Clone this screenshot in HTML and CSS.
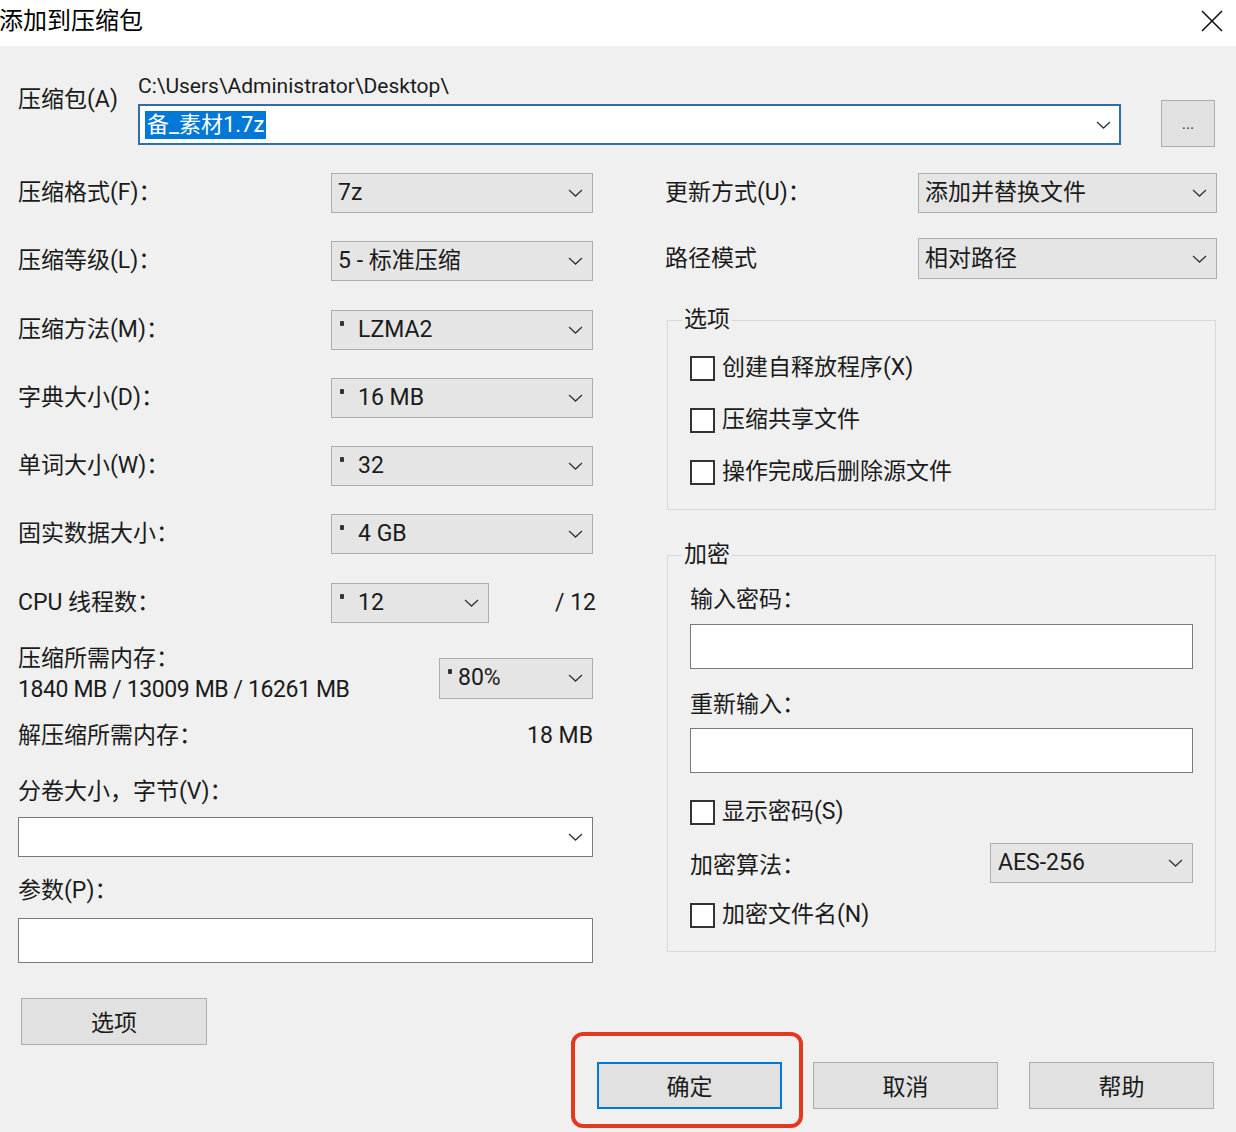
FILE: index.html
```html
<!DOCTYPE html>
<html>
<head>
	<meta charset="utf-8">
	<title>添加到压缩包</title>
	<link rel="stylesheet" href="styles.css">
</head>
<body>
<div class="dialog">
	<div class="titlebar">
		<span class="title">添加到压缩包</span>
		<svg class="close" viewBox="0 0 22 22"><path d="M1 1L21 21M21 1L1 21"/></svg>
	</div>

	<div class="content">
		<div class="archive">
			<div class="archive_label">压缩包(A)</div>
			<div class="archive_field">
				<div class="path">C:\Users\Administrator\Desktop\</div>
				<div class="combo combo_focus">
					<span class="sel_text">备_素材1.7z</span>
					<svg class="chev" viewBox="0 0 15 8"><path d="M1 1L7.5 7L14 1"/></svg>
				</div>
			</div>
			<button class="btn btn_browse">...</button>
		</div>

		<div class="columns">
			<!-- left column -->
			<div class="col_left">
				<div class="grid_rows">
					<div class="row">
						<span class="lbl">压缩格式(F)：</span>
						<div class="select"><span>7z</span><svg class="chev" viewBox="0 0 15 8"><path d="M1 1L7.5 7L14 1"/></svg></div>
					</div>
					<div class="row">
						<span class="lbl">压缩等级(L)：</span>
						<div class="select"><span>5 - 标准压缩</span><svg class="chev" viewBox="0 0 15 8"><path d="M1 1L7.5 7L14 1"/></svg></div>
					</div>
					<div class="row">
						<span class="lbl">压缩方法(M)：</span>
						<div class="select"><span><i class="dot"></i>LZMA2</span><svg class="chev" viewBox="0 0 15 8"><path d="M1 1L7.5 7L14 1"/></svg></div>
					</div>
					<div class="row">
						<span class="lbl">字典大小(D)：</span>
						<div class="select"><span><i class="dot"></i>16 MB</span><svg class="chev" viewBox="0 0 15 8"><path d="M1 1L7.5 7L14 1"/></svg></div>
					</div>
					<div class="row">
						<span class="lbl">单词大小(W)：</span>
						<div class="select"><span><i class="dot"></i>32</span><svg class="chev" viewBox="0 0 15 8"><path d="M1 1L7.5 7L14 1"/></svg></div>
					</div>
					<div class="row">
						<span class="lbl">固实数据大小：</span>
						<div class="select"><span><i class="dot"></i>4 GB</span><svg class="chev" viewBox="0 0 15 8"><path d="M1 1L7.5 7L14 1"/></svg></div>
					</div>
					<div class="row">
						<span class="lbl">CPU 线程数：</span>
						<div class="cpu_cell">
							<div class="select select_cpu"><span><i class="dot"></i>12</span><svg class="chev" viewBox="0 0 15 8"><path d="M1 1L7.5 7L14 1"/></svg></div>
							<span class="cpu_max">/ 12</span>
						</div>
					</div>
				</div>

				<div class="mem">
					<div class="mem_text">
						<div>压缩所需内存：</div>
						<div class="mem_nums">1840 MB / 13009 MB / 16261 MB</div>
					</div>
					<div class="select select_mem"><span><i class="dot dot_near"></i>80%</span><svg class="chev" viewBox="0 0 15 8"><path d="M1 1L7.5 7L14 1"/></svg></div>
				</div>

				<div class="unmem">
					<span>解压缩所需内存：</span>
					<span>18 MB</span>
				</div>

				<div class="lbl_block lbl_volume">分卷大小，字节(V)：</div>
				<div class="combo combo_white">
					<span></span>
					<svg class="chev" viewBox="0 0 15 8"><path d="M1 1L7.5 7L14 1"/></svg>
				</div>

				<div class="lbl_block lbl_param">参数(P)：</div>
				<div class="text_input input_param"></div>

				<button class="btn btn_options">选项</button>
			</div>

			<!-- right column -->
			<div class="col_right">
				<div class="row row_update">
					<span class="lbl">更新方式(U)：</span>
					<div class="select"><span>添加并替换文件</span><svg class="chev" viewBox="0 0 15 8"><path d="M1 1L7.5 7L14 1"/></svg></div>
				</div>
				<div class="row row_path">
					<span class="lbl">路径模式</span>
					<div class="select select_tall"><span>相对路径</span><svg class="chev" viewBox="0 0 15 8"><path d="M1 1L7.5 7L14 1"/></svg></div>
				</div>

				<fieldset class="group group_opts">
					<legend>选项</legend>
					<div class="check check_first"><span class="box"></span>创建自释放程序(X)</div>
					<div class="check"><span class="box"></span>压缩共享文件</div>
					<div class="check"><span class="box"></span>操作完成后删除源文件</div>
				</fieldset>

				<fieldset class="group group_enc">
					<legend>加密</legend>
					<div class="lbl_block lbl_pwd">输入密码：</div>
					<div class="text_input input_pwd"></div>
					<div class="lbl_block lbl_repwd">重新输入：</div>
					<div class="text_input input_repwd"></div>
					<div class="check check_show"><span class="box"></span>显示密码(S)</div>
					<div class="algo">
						<span>加密算法：</span>
						<div class="select select_algo"><span>AES-256</span><svg class="chev" viewBox="0 0 15 8"><path d="M1 1L7.5 7L14 1"/></svg></div>
					</div>
					<div class="check check_names"><span class="box"></span>加密文件名(N)</div>
				</fieldset>
			</div>
		</div>

		<div class="footer">
			<div class="ok_wrap">
				<button class="btn btn_ok">确定</button>
				<span class="mark"></span>
			</div>
			<button class="btn">取消</button>
			<button class="btn">帮助</button>
		</div>
	</div>
</div>
</body>
</html>
```

FILE: styles.css
```css
*{margin: 0;padding: 0;box-sizing: border-box;}
body{font-family: Roboto, "Noto Sans CJK SC", sans-serif;font-size: 23px;color: #1b1b1b;background: #f0f0f0;}
.dialog{width: 1236px;height: 1132px;background: #f0f0f0;overflow: hidden;}

.btn{width: 185px;height: 47px;background: #e1e1e1;border: 1px solid #adadad;font-family: Roboto, "Noto Sans CJK SC", sans-serif;font-size: 23px;color: #1b1b1b;}

.titlebar{height: 46px;background: #fff;display: flex;justify-content: space-between;align-items: center;padding: 0 13px 4px 0;}
.title{font-size: 24px;color: #000;margin-left: -1px;line-height: 30px;}
.close{width: 22px;height: 22px;stroke: #111;stroke-width: 1.6;fill: none;}

.content{padding: 0 19px 0 18px;}

.archive{display: grid;grid-template-columns: 120px 983px 1fr;padding: 25px 2px 0 0;}
.archive_label{line-height: 30px;margin-top: 14px;}
.path{font-size: 21px;line-height: 30px;}
.btn_browse{width: 54px;height: 47px;justify-self: end;align-self: end;margin-bottom: -2px;font-size: 16px;color: #444;line-height: 20px;}

.chev{width: 15px;height: 8px;stroke: #333;stroke-width: 1.3;fill: none;flex-shrink: 0;}

.combo{display: flex;justify-content: space-between;align-items: center;background: #fff;}
.combo_focus{height: 41px;margin-top: 3px;border: 2px solid #2f6ea8;padding: 0 8px 0 5px;}
.sel_text{background: #0078d7;color: #fff;font-size: 22px;line-height: 28px;padding: 0 2px;}
.combo_white{height: 40px;margin-top: 10px;border: 1px solid #7a7a7a;padding: 0 9px 0 7px;}

.select{height: 40px;background: #e5e5e5;border: 1px solid #adadad;display: flex;justify-content: space-between;align-items: center;padding: 0 9px 0 6px;line-height: 30px;}
.select_tall{height: 41px;}
.dot{display: inline-block;width: 4px;height: 5px;background: #333;border-radius: 1px;vertical-align: 11px;margin: 0 14px 0 2px;}
.dot_near{margin: 0 6px 0 1px;}

.text_input{background: #fff;border: 1px solid #7a7a7a;height: 45px;}

.columns{display: grid;grid-template-columns: 575px 552px;column-gap: 72px;margin-top: 28px;}

.grid_rows{display: flex;flex-direction: column;gap: 28.3px;}
.row{display: grid;grid-template-columns: 313px 262px;height: 40px;align-items: center;}
.lbl{line-height: 30px;white-space: nowrap;}
.row .select{height: 100%;}
.cpu_cell{display: flex;justify-content: space-between;align-items: center;height: 100%;}
.select_cpu{width: 158px;}
.cpu_max{margin-right: -3px;}

.mem{margin-top: 20px;display: flex;justify-content: space-between;align-items: flex-start;}
.mem_text{line-height: 31px;}
.mem_nums{letter-spacing: -0.4px;}
.select_mem{width: 154px;height: 41px;margin-top: 15px;padding-left: 7px;}

.unmem{display: flex;justify-content: space-between;line-height: 30px;margin-top: 16px;}
.lbl_block{line-height: 30px;}
.lbl_volume{margin-top: 26px;}
.lbl_param{margin-top: 19px;}
.input_param{margin-top: 12px;}
.btn_options{display: block;width: 186px;margin: 35px 0 0 3px;}

.col_right .row{grid-template-columns: 253px 299px;}
.row_path{margin-top: 25px;height: 41px;}

.group{border: 1px solid #d9d9d9;margin: 0 1px 0 2px;padding: 0 22px 21px;min-width: 0;}
.group legend{line-height: 30px;padding: 0 2px;margin-left: -8px;}
.group_opts{margin-top: 26px;padding-bottom: 22px;}
.group_enc{margin-top: 30px;}

.check{display: flex;align-items: center;line-height: 30px;margin-top: 22px;}
.check_first{margin-top: 18px;}
.box{width: 25px;height: 25px;border: 2px solid #333;background: #fff;margin-right: 7px;}

.lbl_pwd{margin-top: 15px;}
.input_pwd{margin-top: 9px;}
.lbl_repwd{margin-top: 21px;}
.input_repwd{margin-top: 8px;}
.check_show{margin-top: 24px;}
.algo{display: flex;justify-content: space-between;align-items: center;height: 40px;margin-top: 16px;}
.select_algo{width: 203px;height: 40px;padding-left: 7px;}
.check_names{margin-top: 17px;}

.footer{display: flex;justify-content: flex-end;gap: 31px;margin-top: 17px;padding-right: 3px;}
.ok_wrap{position: relative;}
.btn_ok{border: 2px solid #0078d7;}
.mark{position: absolute;left: -26px;right: -21px;top: -30px;bottom: -19px;border: 4px solid #e3391f;border-radius: 12px;}
```
